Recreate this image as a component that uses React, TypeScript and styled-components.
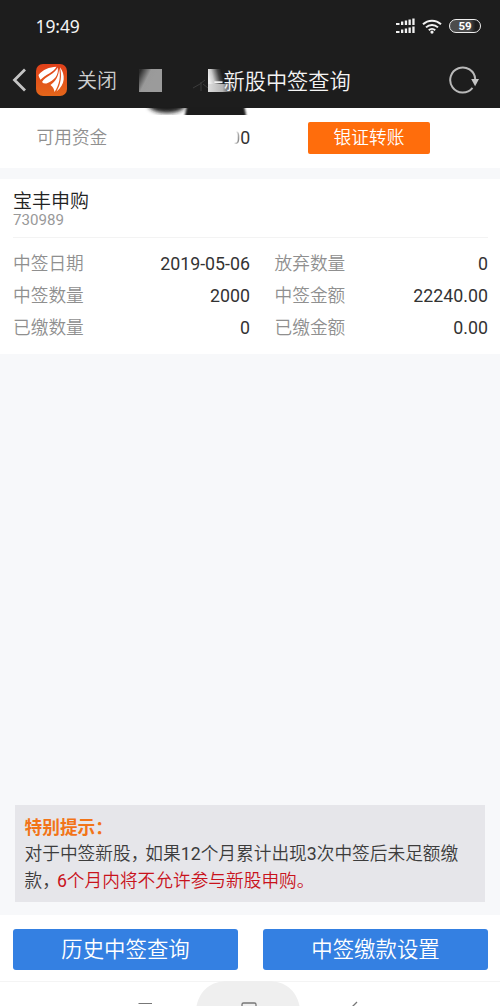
import React from "react";
import styled, { createGlobalStyle } from "styled-components";

const GlobalStyle = createGlobalStyle`
  * { box-sizing: border-box; }
  body {
    margin: 0;
    background: #fff;
    font-family: Roboto, "Noto Sans CJK SC", sans-serif;
    font-weight: 350;
  }
`;

const Screen = styled.div`
  width: 500px;
  height: 1006px;
  display: flex;
  flex-direction: column;
  overflow: hidden;
  background: #f7f8fa;
`;

const Header = styled.header`
  position: relative;
  flex: none;
  height: 108px;
  background: #1d1d1d;
  color: #f4f4f4;
`;

const StatusBar = styled.div`
  height: 52px;
  padding: 0 19px 0 35.5px;
  display: flex;
  align-items: center;
`;

const Clock = styled.span`
  flex: 1;
  font: 400 17.5px/24px "Noto Sans", sans-serif;
  letter-spacing: -0.1px;
`;

const StatusIcons = styled.div`
  display: flex;
  align-items: center;
  gap: 7px;
`;

const Battery = styled.div`
  width: 32px;
  height: 14px;
  border: 1.5px solid #eee;
  border-radius: 7px;
  background: linear-gradient(90deg, #4c4c4c 65%, #1d1d1d 85%);
  color: #fff;
  font: 700 11.5px/12px Roboto, sans-serif;
  text-align: center;
`;

const TitleBar = styled.div`
  height: 56px;
  padding: 0 20px 0 12px;
  display: flex;
  align-items: center;
`;

const CloseLabel = styled.span`
  margin-left: 10px;
  padding-top: 2px;
  width: 64px;
  font-size: 20px;
  line-height: 28px;
  color: #cfcfcf;
`;

const TitleText = styled.h1`
  margin: 0 0 0 71.5px;
  padding-top: 3px;
  flex: 1;
  display: flex;
  font-size: 21.2px;
  line-height: 28px;
  font-weight: 350;
  white-space: nowrap;
  z-index: 1;
`;

const Dash = styled.span`
  width: 11px;
  text-align: center;
  font-weight: 400;
  transform: scaleX(1.6);
`;

const Smudges = styled.svg`
  position: absolute;
  left: 130px;
  top: 60px;
`;

const Funds = styled.section`
  flex: none;
  height: 60px;
  padding: 0 70px 1px 36.5px;
  display: flex;
  align-items: center;
  background: #fff;
`;

const Label = styled.span`
  font-size: 17.7px;
  line-height: 26px;
  color: #8f8f8f;
`;

const FundsValue = styled.span`
  width: 143px;
  text-align: right;
  font-size: 17.8px;
  font-weight: 400;
  line-height: 26px;
  color: #333;
`;

const Erased = styled.span`
  color: transparent;
  background: linear-gradient(100deg, transparent 50%, #777 85%);
  background-clip: text;
  -webkit-background-clip: text;
`;

const TransferButton = styled.button`
  margin-left: auto;
  width: 122px;
  height: 32px;
  padding: 0;
  border: 0;
  border-radius: 2px;
  background: #ff6d0c;
  color: #fff;
  font: 350 17.7px/28px Roboto, "Noto Sans CJK SC", sans-serif;
`;

const Card = styled.section`
  flex: none;
  margin-top: 11px;
  height: 175px;
  padding: 10px 12px 0 13px;
  background: #fff;
`;

const CardHead = styled.div`
  height: 49px;
  border-bottom: 1px solid #f3f3f3;
`;

const StockName = styled.div`
  font-size: 19px;
  line-height: 25px;
  color: #222;
`;

const StockCode = styled.div`
  font-size: 15.1px;
  font-weight: 400;
  line-height: 13px;
  color: #999;
`;

const Details = styled.div`
  padding-top: 10px;
  display: grid;
  grid-template-columns: 237px 213.5px;
  column-gap: 24.5px;
  grid-auto-rows: 32px;
`;

const Detail = styled.div`
  display: flex;
  align-items: center;
  justify-content: space-between;
`;

const Value = styled.span`
  font-size: 17.8px;
  font-weight: 400;
  line-height: 26px;
  color: #333;
`;

const Notice = styled.aside`
  flex: none;
  margin: auto 15px 13px;
  height: 97px;
  padding: 9.5px 0 0 9.5px;
  background: #e6e6ea;
  color: #3c3c3c;
  font-size: 17.72px;
  line-height: 26.6px;
  white-space: nowrap;
`;

const NoticeTitle = styled.div`
  font-weight: 700;
  color: #f27418;
`;

const Comma = styled.span`
  letter-spacing: -3px;
`;

const Digits = styled.span`
  font-weight: 400;
`;

const Warning = styled.span`
  color: #c9131c;
`;

const Footer = styled.footer`
  flex: none;
  height: 66px;
  padding: 14px 12px 0 13px;
  display: flex;
  gap: 25px;
  background: #fff;
`;

const ActionButton = styled.button`
  flex: 1;
  height: 41px;
  padding: 1px 0 0;
  border: 0;
  border-radius: 3px;
  background: #3480e2;
  color: #fff;
  font: 350 21.4px/30px Roboto, "Noto Sans CJK SC", sans-serif;
`;

const SystemNav = styled.nav`
  flex: none;
  height: 25px;
  box-shadow: inset 0 1px #f4f4f4;
  background: #fff;
`;

const details = [
  ["中签日期", "2019-05-06"],
  ["放弃数量", "0"],
  ["中签数量", "2000"],
  ["中签金额", "22240.00"],
  ["已缴数量", "0"],
  ["已缴金额", "0.00"],
];

const SignalIcon = () => (
  <svg width="19" height="16" viewBox="0 0 19 16" fill="#f2f2f2">
    {[0, 8].map((y) => (
      <g key={y} transform={`translate(0 ${y})`}>
        <rect x="0" y="5" width="3.5" height="2" />
        <rect x="5" y="3.5" width="2.3" height="3.5" />
        <rect x="8.8" y="2.5" width="2.3" height="4.5" />
        <rect x="12.5" y="1.5" width="2.3" height="5.5" />
        <rect x="16.3" y="0.5" width="2.3" height="6.5" />
      </g>
    ))}
  </svg>
);

const WifiIcon = () => (
  <svg width="20" height="15" viewBox="0 0 20 15" fill="none" stroke="#f2f2f2" strokeWidth="2">
    <path d="M1 5.3a13 13 0 0 1 18 0" />
    <path d="M4 8.4a8.7 8.7 0 0 1 12 0" />
    <path d="M6.8 11.2a4.7 4.7 0 0 1 6.4 0" />
    <circle cx="10" cy="13.1" r="1.6" fill="#f2f2f2" stroke="none" />
  </svg>
);

const BackIcon = () => (
  <svg width="15" height="24" viewBox="0 0 15 24" fill="none" stroke="#c4c4c4" strokeWidth="2.8">
    <path d="M13 1.5 2.5 12 13 22.5" />
  </svg>
);

const LogoMark = styled.svg`
  margin-left: 9px;
`;

const Logo = () => (
  <LogoMark width="31" height="32" viewBox="0 0 31 32">
    <defs>
      <linearGradient id="logo" x1="0" y1="0" x2="0" y2="1">
        <stop offset="0" stopColor="#e1401a" />
        <stop offset="1" stopColor="#e4661a" />
      </linearGradient>
    </defs>
    <rect width="31" height="32" rx="7" fill="url(#logo)" />
    <g fill="#fff">
      <path d="M2.5 11C7 5.5 13 3.300 20.500 2.800 17.500 8.500 9.500 10.500 4.500 15.800Q2.800 13.500 2.500 11Z" />
      <path d="M6 18C10 11.500 18.500 10.500 21.700 3.500 23 11 18.500 16.500 10.500 19.500Q7.500 20 6 18Z" />
      <path d="M14.500 21C19.500 17.500 23 12 23 4.500 25 12 23.500 20.500 18.500 28Q18 23.500 14.500 21Z" />
      <path d="M20.500 27.500C25 20 26 12 23.900 3.300 29.500 10 29.500 21 20.500 27.500Z" />
    </g>
  </LogoMark>
);

const RefreshIcon = () => (
  <svg width="31" height="28" viewBox="0 0 31 28">
    <path d="M23.5 21.8A12.5 12.5 0 1 1 26.2 13" fill="none" stroke="#b9b9b9" strokeWidth="2" />
    <path d="M22.2 13h7.8l-3.900 7.300Z" fill="#c5c5c5" />
  </svg>
);

const SmudgeArt = () => (
  <Smudges width="125" height="56" viewBox="0 0 125 56">
    <defs>
      <linearGradient id="patchA" x1="0" y1=".2" x2=".6" y2=".5">
        <stop offset="0" stopColor="#2b2b2b" />
        <stop offset=".6" stopColor="#999" />
        <stop offset="1" stopColor="#9b9b9b" />
      </linearGradient>
      <linearGradient id="patchB" x1="0" y1=".3" x2=".8" y2="0">
        <stop offset="0" stopColor="#eee" />
        <stop offset=".3" stopColor="#ccc" />
        <stop offset=".75" stopColor="#444" />
        <stop offset="1" stopColor="#1d1d1d" />
      </linearGradient>
      <linearGradient id="patchC" x1="0" y1="0" x2="1" y2="0">
        <stop offset="0" stopColor="#ddd" />
        <stop offset=".6" stopColor="#b5b5b5" />
        <stop offset="1" stopColor="#333" />
      </linearGradient>
      <filter id="soft"><feGaussianBlur stdDeviation="2" /></filter>
      <filter id="slight"><feGaussianBlur stdDeviation="1" /></filter>
      <clipPath id="below"><rect x="10" y="47" width="115" height="8" /></clipPath>
    </defs>
    <rect x="9" y="9" width="23" height="23" fill="url(#patchA)" />
    <rect x="78" y="9" width="16" height="23" fill="url(#patchB)" />
    <rect x="78" y="24" width="24" height="8" fill="url(#patchC)" />
    <path d="M63 28l7-4 5-4M71 22v9M73 24l5 4" fill="none" stroke="#3c3c3c" />
    <g clipPath="url(#below)">
      <ellipse cx="37" cy="44" rx="19" ry="9" fill="#1d1d1d" filter="url(#soft)" />
      <path d="M58 40H113L117 60H54Z" fill="#1d1d1d" filter="url(#slight)" />
    </g>
  </Smudges>
);

const NavIcons = () => (
  <svg width="500" height="25" viewBox="0 0 500 25" fill="none" stroke="#777">
    <path d="M196.5 25C200 9 211 0 228 0H268C285 0 296 9 299.5 25Z" fill="#efefef" stroke="none" />
    <path d="M138.5 22.5h13.5" />
    <path d="M242 25v-1.500q0-1.500 1.500-1.500h11q1.500 0 1.500 1.500V25" strokeWidth="1.3" />
    <path d="m352 26 5-5" strokeWidth="1.3" />
  </svg>
);

export default function App() {
  return (
    <>
      <GlobalStyle />
      <Screen>
        <Header>
          <StatusBar>
            <Clock>19:49</Clock>
            <StatusIcons>
              <SignalIcon />
              <WifiIcon />
              <Battery>59</Battery>
            </StatusIcons>
          </StatusBar>
          <TitleBar>
            <BackIcon />
            <Logo />
            <CloseLabel>关闭</CloseLabel>
            <TitleText>
              <Dash>-</Dash>新股中签查询
            </TitleText>
            <RefreshIcon />
          </TitleBar>
          <SmudgeArt />
        </Header>
        <Funds>
          <Label>可用资金</Label>
          <FundsValue>
            <Erased>0</Erased>0
          </FundsValue>
          <TransferButton>银证转账</TransferButton>
        </Funds>
        <Card>
          <CardHead>
            <StockName>宝丰申购</StockName>
            <StockCode>730989</StockCode>
          </CardHead>
          <Details>
            {details.map(([label, value]) => (
              <Detail key={label}>
                <Label>{label}</Label>
                <Value>{value}</Value>
              </Detail>
            ))}
          </Details>
        </Card>
        <Notice>
          <NoticeTitle>特别提示：</NoticeTitle>
          <div>
            对于中签新股<Comma>，</Comma>如果<Digits>12</Digits>个月累计出现<Digits>3</Digits>次中签后未足额缴
          </div>
          <div>
            款<Comma>，</Comma>
            <Warning><Digits>6</Digits>个月内将不允许参与新股申购。</Warning>
          </div>
        </Notice>
        <Footer>
          <ActionButton>历史中签查询</ActionButton>
          <ActionButton>中签缴款设置</ActionButton>
        </Footer>
        <SystemNav>
          <NavIcons />
        </SystemNav>
      </Screen>
    </>
  );
}
